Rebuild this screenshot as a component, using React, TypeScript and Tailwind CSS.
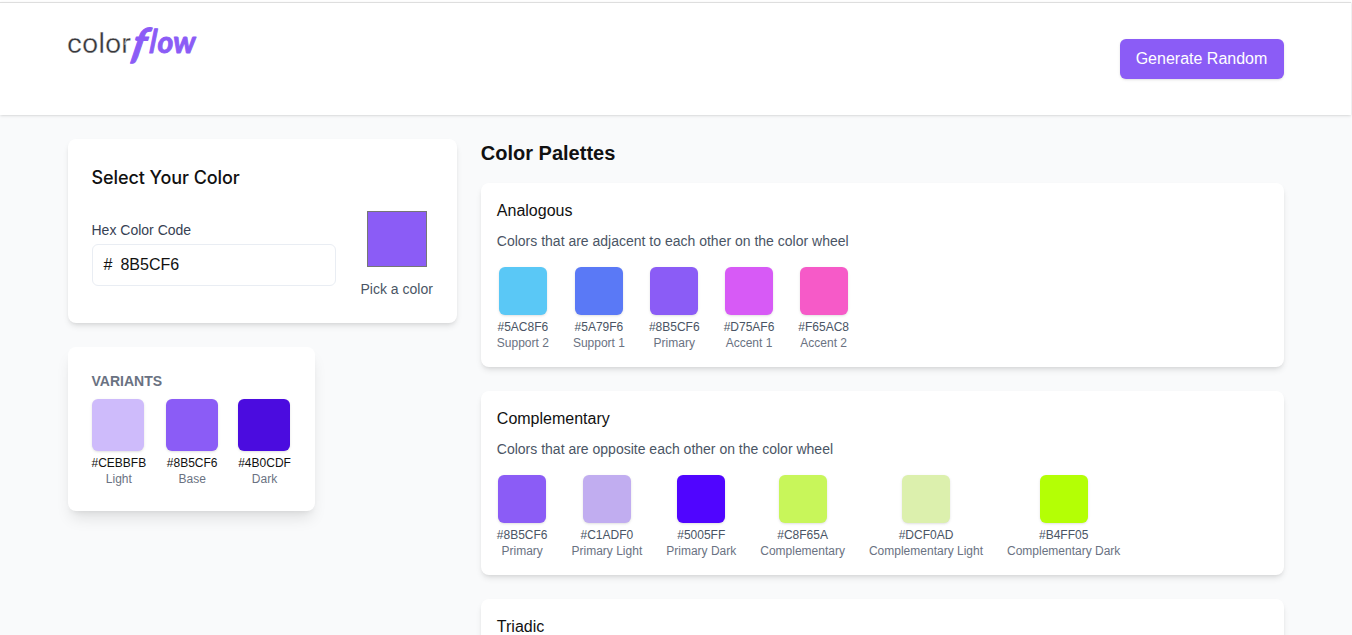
type Swatch = {
  hex: string;
  name: string;
};

const variants: Swatch[] = [
  { hex: "#CEBBFB", name: "Light" },
  { hex: "#8B5CF6", name: "Base" },
  { hex: "#4B0CDF", name: "Dark" },
];

const palettes: { title: string; description?: string; colors: Swatch[] }[] = [
  {
    title: "Analogous",
    description: "Colors that are adjacent to each other on the color wheel",
    colors: [
      { hex: "#5AC8F6", name: "Support 2" },
      { hex: "#5A79F6", name: "Support 1" },
      { hex: "#8B5CF6", name: "Primary" },
      { hex: "#D75AF6", name: "Accent 1" },
      { hex: "#F65AC8", name: "Accent 2" },
    ],
  },
  {
    title: "Complementary",
    description: "Colors that are opposite each other on the color wheel",
    colors: [
      { hex: "#8B5CF6", name: "Primary" },
      { hex: "#C1ADF0", name: "Primary Light" },
      { hex: "#5005FF", name: "Primary Dark" },
      { hex: "#C8F65A", name: "Complementary" },
      { hex: "#DCF0AD", name: "Complementary Light" },
      { hex: "#B4FF05", name: "Complementary Dark" },
    ],
  },
  {
    title: "Triadic",
    colors: [],
  },
];

const Logo = () => (
  <svg width="132" height="48" viewBox="0 0 132 48" className="block overflow-visible">
    <text x="-1" y="34" fontSize="27" fontWeight="400" fill="#38383b" fontFamily="Roboto, sans-serif" textLength="64" lengthAdjust="spacingAndGlyphs" stroke="#fff" strokeWidth="0.3">
      color
    </text>
    <g fill="#8b5cf6" stroke="#8b5cf6" strokeLinejoin="round" fontFamily="Lato, sans-serif" fontWeight="700" fontStyle="italic" strokeWidth="0.9">
      <text fontSize="37" transform="translate(62 39) skewX(-12) scale(1.12 1.12)">
        f
      </text>
      <text fontSize="26" transform="translate(81 33.5) skewX(-6) scale(1 1.25)">
        l
      </text>
      <text x="89.5" y="33.5" fontSize="30" textLength="38" lengthAdjust="spacingAndGlyphs">
        ow
      </text>
    </g>
  </svg>
);

const Header = () => (
  <header className="border-t border-[#dedede] bg-white shadow-sm">
    <div className="mx-auto flex h-28 max-w-7xl items-center justify-between px-8">
      <div className="h-20">
        <Logo />
      </div>
      <button className="h-10 w-41 rounded-md bg-[#8b5cf6] pb-px text-base text-white shadow-sm">Generate Random</button>
    </div>
  </header>
);

const ColorSelector = () => (
  <div className="rounded-lg bg-white p-6 shadow-md">
    <h2 className="mb-[15px] pt-px font-[Inter,sans-serif] text-lg/7 font-medium tracking-[-0.004em]">Select Your Color</h2>
    <div className="flex items-center gap-6">
      <div className="flex-1">
        <label className="mb-1 block text-sm text-gray-700">Hex Color Code</label>
        <div className="flex h-[42px] items-center gap-2 rounded-md border border-[#e9edf3] px-[11px]">
          <span>#</span>
          <span>8B5CF6</span>
        </div>
      </div>
      <div className="flex flex-col items-center">
        <div className="h-16 w-16 px-0.5 py-1">
          <div className="h-full border border-[#767676] bg-[#8b5cf6]"></div>
        </div>
        <span className="mt-2 text-sm text-gray-600">Pick a color</span>
      </div>
    </div>
  </div>
);

const Variants = () => (
  <div className="w-fit rounded-lg bg-white p-6 shadow-lg">
    <h3 className="mb-2 text-sm font-bold text-gray-500">VARIANTS</h3>
    <div className="flex gap-5">
      {variants.map((item) => (
        <div key={item.name} className="text-center text-xs">
          <div className="mb-1 h-13 w-13 rounded-md shadow-sm" style={{ backgroundColor: item.hex }}></div>
          <p>{item.hex}</p>
          <p className="text-gray-500">{item.name}</p>
        </div>
      ))}
    </div>
  </div>
);

const App = () => {
  return (
    <div className="h-screen overflow-hidden bg-gray-50 font-['Liberation_Sans',sans-serif] text-[#111]">
      <div className="h-0.5 bg-white"></div>
      <div className="pr-px">
        <Header />
        <main className="mx-auto grid max-w-7xl grid-cols-3 gap-6 px-8 py-6">
          <div className="flex flex-col gap-6">
            <ColorSelector />
            <Variants />
          </div>
          <section className="col-span-2">
            <h2 className="mb-4 text-xl/7 font-bold">Color Palettes</h2>
            <div className="flex flex-col gap-6">
              {palettes.map((palette) => (
                <div key={palette.title} className="min-h-46 rounded-lg bg-white p-4 shadow-md">
                  <h3 className="mb-2 text-base">{palette.title}</h3>
                  {palette.description && <p className="mb-4 text-sm text-gray-600">{palette.description}</p>}
                  <div className="flex gap-6">
                    {palette.colors.map((color) => (
                      <div key={color.name} className="flex flex-col items-center text-xs">
                        <div className="mb-1 h-12 w-12 rounded-md shadow-sm" style={{ backgroundColor: color.hex }}></div>
                        <span className="text-gray-600">{color.hex}</span>
                        <span className="text-gray-500">{color.name}</span>
                      </div>
                    ))}
                  </div>
                </div>
              ))}
            </div>
          </section>
        </main>
      </div>
    </div>
  );
};

export default App;
